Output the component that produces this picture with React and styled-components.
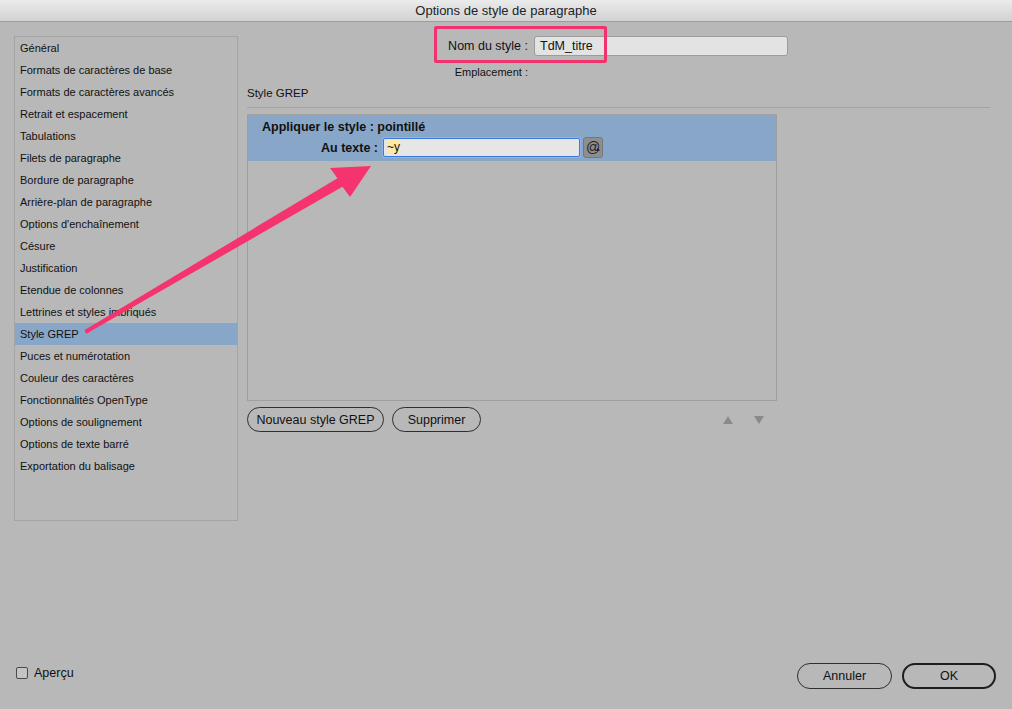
import styled, { createGlobalStyle } from "styled-components";

const GlobalStyle = createGlobalStyle`
    html, body {
        margin: 0;
        padding: 0;
        background: #b8b8b8;
    }
    * {
        box-sizing: border-box;
    }
`;

const Window = styled.div`
    position: relative;
    width: 1012px;
    height: 709px;
    display: flex;
    flex-direction: column;
    background: #b8b8b8;
    font-family: "Liberation Sans", Arial, sans-serif;
    color: #111;
    overflow: hidden;
`;

const TitleBar = styled.div`
    height: 22px;
    display: flex;
    align-items: center;
    justify-content: center;
    background: linear-gradient(#ebebeb, #d2d2d2);
    border-bottom: 1px solid #9c9c9c;
    font-size: 13px;
    color: #222;
`;

const Body = styled.div`
    display: grid;
    grid-template-columns: 224px 1fr;
    column-gap: 9px;
    padding: 14px 22px 0 14px;
`;

const CategoryList = styled.ul`
    list-style: none;
    margin: 0;
    padding: 0;
    height: 485px;
    border: 1px solid #a4a4a4;
`;

const CategoryItem = styled.li`
    height: 22px;
    line-height: 22px;
    padding-left: 5px;
    font-size: 11px;
    background: ${p => (p.$active ? "#88a6c8" : "transparent")};
`;

const Content = styled.div`
    display: flex;
    flex-direction: column;
`;

const NameRow = styled.div`
    position: relative;
    display: grid;
    grid-template-columns: 281px 254px;
    column-gap: 6px;
    align-items: center;
    height: 20px;
`;

const FieldLabel = styled.span`
    text-align: right;
    font-size: ${p => p.$size || 12.5}px;
    font-weight: ${p => (p.$bold ? 700 : 400)};
`;

const NameInput = styled.div`
    height: 20px;
    background: #e3e3e3;
    border: 1px solid #9c9c9c;
    border-radius: 3px;
    padding-left: 5px;
    font-size: 12.5px;
    line-height: 18px;
`;

const Highlight = styled.div`
    position: absolute;
    left: 187px;
    top: -10px;
    width: 173px;
    height: 37px;
    border: 3px solid #f2326e;
    border-radius: 2px;
`;

const LocationRow = styled.div`
    display: grid;
    grid-template-columns: 281px;
    margin-top: 10px;
    height: 13px;
    line-height: 13px;
`;

const SectionTitle = styled.div`
    margin-top: 7px;
    font-size: 11.5px;
    line-height: 14px;
    padding-bottom: 7px;
    border-bottom: 1px solid #a3a3a3;
`;

const GrepPanel = styled.div`
    margin-top: 6px;
    width: 530px;
    height: 287px;
    border: 1px solid #9f9f9f;
`;

const GrepRow = styled.div`
    height: 46px;
    background: #88a6c8;
    padding: 5px 0 0 14px;
    display: flex;
    flex-direction: column;
`;

const RuleTitle = styled.div`
    font-size: 12.5px;
    font-weight: 700;
    line-height: 15px;
`;

const RuleLine = styled.div`
    display: grid;
    grid-template-columns: 116px 197px 20px;
    column-gap: 5px;
    align-items: center;
    margin-top: 2px;
`;

const PatternInput = styled.div`
    height: 19px;
    background: #e6e6e6;
    border: 1px solid #3b7be0;
    box-shadow: 0 0 0 1px #8fb2ea;
    border-radius: 2px;
    padding-left: 3px;
    font-size: 12px;
    line-height: 17px;

    & span {
        background: #fbeaa5;
    }
`;

const SpecialButton = styled.div`
    position: relative;
    width: 20px;
    height: 21px;
    margin-left: -2px;
    background: #8e8e8e;
    border: 1px solid #787878;
    border-radius: 3px;
    font-size: 14px;
    line-height: 19px;
    padding-left: 2px;
    color: #222;

    &::after {
        content: "";
        position: absolute;
        right: 2px;
        bottom: 5px;
        border-left: 3px solid #222;
        border-top: 2px solid transparent;
        border-bottom: 2px solid transparent;
    }
`;

const ActionRow = styled.div`
    width: 530px;
    margin-top: 6px;
    display: flex;
    align-items: center;
    gap: 8px;
`;

const PillButton = styled.button`
    height: ${p => (p.$large ? 26 : 25)}px;
    width: ${p => p.$w}px;
    border: ${p => (p.$primary ? "2px solid #1e1e1e" : "1px solid #2e2e2e")};
    border-radius: 13px;
    background: transparent;
    font-family: "Liberation Sans", Arial, sans-serif;
    font-size: 12.5px;
    color: #111;
    padding: 0;
`;

const Arrows = styled.div`
    margin-left: auto;
    margin-right: 13px;
    display: flex;
    gap: 21px;
`;

const Triangle = styled.span`
    width: 0;
    height: 0;
    border-left: 5px solid transparent;
    border-right: 5px solid transparent;
    ${p => (p.$down ? "border-top: 8px solid #8a8a8a;" : "border-bottom: 8px solid #8a8a8a;")}
`;

const Footer = styled.div`
    margin-top: auto;
    display: flex;
    align-items: center;
    padding: 0 16px 20px 16px;
`;

const Preview = styled.label`
    display: flex;
    align-items: center;
    gap: 6px;
    margin-bottom: 6px;
    font-size: 12.5px;
`;

const CheckBox = styled.span`
    width: 12px;
    height: 12px;
    border: 1px solid #4a4a4a;
    border-radius: 2px;
    background: #c4c4c4;
`;

const FooterButtons = styled.div`
    margin-left: auto;
    display: flex;
    gap: 10px;
`;

const Overlay = styled.svg`
    position: absolute;
    left: 0;
    top: 0;
    pointer-events: none;
`;

const categories = [
    "Général",
    "Formats de caractères de base",
    "Formats de caractères avancés",
    "Retrait et espacement",
    "Tabulations",
    "Filets de paragraphe",
    "Bordure de paragraphe",
    "Arrière-plan de paragraphe",
    "Options d'enchaînement",
    "Césure",
    "Justification",
    "Etendue de colonnes",
    "Lettrines et styles imbriqués",
    "Style GREP",
    "Puces et numérotation",
    "Couleur des caractères",
    "Fonctionnalités OpenType",
    "Options de soulignement",
    "Options de texte barré",
    "Exportation du balisage",
];

export default function App() {
    return (
        <>
            <GlobalStyle />
            <Window>
                <TitleBar>Options de style de paragraphe</TitleBar>
                <Body>
                    <CategoryList>
                        {categories.map(c => (
                            <CategoryItem key={c} $active={c === "Style GREP"}>{c}</CategoryItem>
                        ))}
                    </CategoryList>
                    <Content>
                        <NameRow>
                            <FieldLabel>Nom du style :</FieldLabel>
                            <NameInput>TdM_titre</NameInput>
                            <Highlight />
                        </NameRow>
                        <LocationRow>
                            <FieldLabel $size={11}>Emplacement :</FieldLabel>
                        </LocationRow>
                        <SectionTitle>Style GREP</SectionTitle>
                        <GrepPanel>
                            <GrepRow>
                                <RuleTitle>Appliquer le style : pointillé</RuleTitle>
                                <RuleLine>
                                    <FieldLabel $bold>Au texte :</FieldLabel>
                                    <PatternInput><span>~y</span></PatternInput>
                                    <SpecialButton>@</SpecialButton>
                                </RuleLine>
                            </GrepRow>
                        </GrepPanel>
                        <ActionRow>
                            <PillButton $w={137}>Nouveau style GREP</PillButton>
                            <PillButton $w={89}>Supprimer</PillButton>
                            <Arrows>
                                <Triangle />
                                <Triangle $down />
                            </Arrows>
                        </ActionRow>
                    </Content>
                </Body>
                <Footer>
                    <Preview>
                        <CheckBox />
                        Aperçu
                    </Preview>
                    <FooterButtons>
                        <PillButton $large $w={95}>Annuler</PillButton>
                        <PillButton $large $primary $w={94}>OK</PillButton>
                    </FooterButtons>
                </Footer>
                <Overlay width="1012" height="709" viewBox="0 0 1012 709">
                    <circle cx="87" cy="331" r="2.2" fill="#f5336f" />
                    <polygon
                        fill="#f5336f"
                        points="86,329.2 337.5,178.2 330,168 371,166 350,197 342.5,186.8 88,332.8"
                    />
                </Overlay>
            </Window>
        </>
    );
}
